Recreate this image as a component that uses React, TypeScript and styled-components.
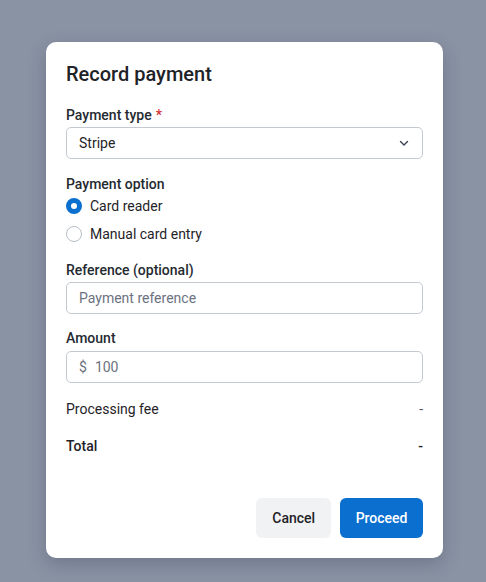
import React from "react";
import styled, { createGlobalStyle } from "styled-components";

const Global = createGlobalStyle`
  html, body { margin: 0; padding: 0; }
  body {
    background: #8a93a4;
    font-family: Roboto, "Noto Sans", sans-serif;
    color: #1f2328;
    -webkit-font-smoothing: antialiased;
  }
`;

const Page = styled.div`
  width: 486px;
  height: 582px;
  display: flex;
  padding: 42px 0 0 46px;
  box-sizing: border-box;
`;

const Card = styled.div`
  width: 397px;
  height: 516px;
  box-sizing: border-box;
  background: #fff;
  border-radius: 10px;
  box-shadow: 0 6px 18px rgba(30, 40, 60, 0.25);
  padding: 20px;
  display: flex;
  flex-direction: column;
`;

const Title = styled.h2`
  margin: 0;
  font-size: 20px;
  font-weight: 500;
  line-height: 24px;
  color: #1f2328;
  margin-bottom: 20px;
`;

const Field = styled.div<{ $mb?: number }>`
  display: flex;
  flex-direction: column;
  margin-bottom: ${(p) => p.$mb ?? 0}px;
`;

const Label = styled.div<{ $mb?: number }>`
  font-size: 14px;
  font-weight: 500;
  line-height: 18px;
  color: #252a31;
  margin-bottom: ${(p) => p.$mb ?? 3}px;
`;

const Req = styled.span`
  color: #d32f2f;
  margin-left: 4px;
`;

const Box = styled.div`
  height: 32px;
  box-sizing: border-box;
  border: 1px solid #c4c9d2;
  border-radius: 5px;
  display: flex;
  align-items: center;
  padding: 0 12px;
  font-size: 14px;
  color: #1f2328;
  gap: 8px;
`;

const Grow = styled.span`
  flex: 1;
`;

const Placeholder = styled.span`
  color: #6b7280;
`;

const RadioRow = styled.div`
  display: flex;
  align-items: center;
  gap: 8px;
  height: 28px;
  font-size: 14px;
  color: #1f2328;
`;

const Radio = styled.span<{ $checked?: boolean }>`
  width: 16px;
  height: 16px;
  box-sizing: border-box;
  border-radius: 50%;
  border: ${(p) => (p.$checked ? "5px solid #0b6fd0" : "1px solid #b6bcc6")};
  background: #fff;
`;

const Row = styled.div<{ $bold?: boolean; $mb?: number }>`
  display: flex;
  justify-content: space-between;
  font-size: 14px;
  line-height: 18px;
  color: #1f2328;
  font-weight: ${(p) => (p.$bold ? 500 : 400)};
  margin-bottom: ${(p) => p.$mb ?? 0}px;
`;

const Dash = styled.span<{ $bold?: boolean }>`
  color: ${(p) => (p.$bold ? "#1f2328" : "#4b5563")};
`;

const Footer = styled.div`
  margin-top: auto;
  display: flex;
  justify-content: flex-end;
  gap: 9px;
`;

const Button = styled.button<{ $primary?: boolean }>`
  height: 40px;
  border: none;
  border-radius: 6px;
  padding: 0 ${(p) => (p.$primary ? 15.5 : 16)}px;
  font-family: inherit;
  font-size: 14px;
  font-weight: 500;
  background: ${(p) => (p.$primary ? "#0b6fd0" : "#f1f2f4")};
  color: ${(p) => (p.$primary ? "#fff" : "#1f2328")};
`;

export default function App() {
  return (
    <>
      <Global />
      <Page>
        <Card>
          <Title>Record payment</Title>
          <Field $mb={16}>
            <Label>
              Payment type<Req>*</Req>
            </Label>
            <Box>
              <Grow>Stripe</Grow>
              <svg width="12" height="12" viewBox="0 0 12 12" fill="none">
                <path d="M2.5 4.5 6 8l3.5-3.5" stroke="#374151" strokeWidth="1.4" strokeLinecap="round" strokeLinejoin="round" />
              </svg>
            </Box>
          </Field>
          <Field $mb={13}>
            <Label $mb={-1}>Payment option</Label>
            <RadioRow>
              <Radio $checked />
              Card reader
            </RadioRow>
            <RadioRow>
              <Radio />
              Manual card entry
            </RadioRow>
          </Field>
          <Field $mb={15}>
            <Label>Reference (optional)</Label>
            <Box>
              <Placeholder>Payment reference</Placeholder>
            </Box>
          </Field>
          <Field $mb={17}>
            <Label $mb={4}>Amount</Label>
            <Box>
              <Placeholder>$</Placeholder>
              <Placeholder>100</Placeholder>
            </Box>
          </Field>
          <Row $mb={19}>
            <span>Processing fee</span>
            <Dash>-</Dash>
          </Row>
          <Row $bold>
            <span>Total</span>
            <Dash $bold>-</Dash>
          </Row>
          <Footer>
            <Button>Cancel</Button>
            <Button $primary>Proceed</Button>
          </Footer>
        </Card>
      </Page>
    </>
  );
}
